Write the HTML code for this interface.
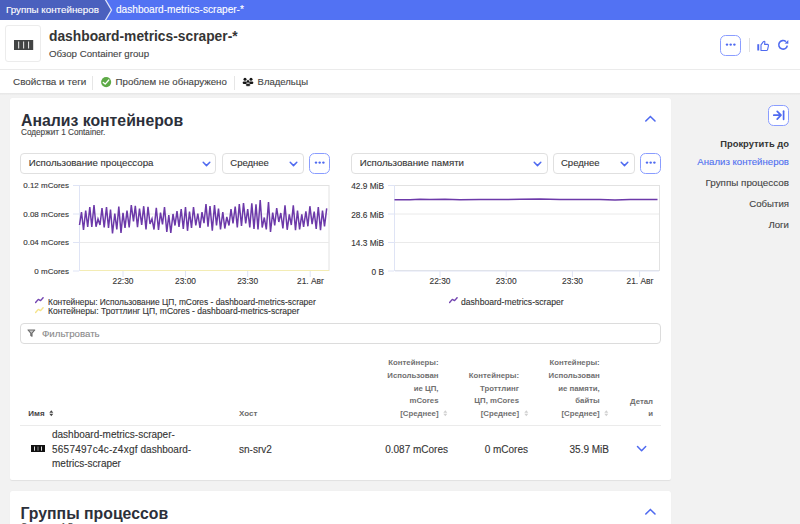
<!DOCTYPE html>
<html><head><meta charset="utf-8">
<style>
*{box-sizing:border-box;margin:0;padding:0}
html,body{-webkit-text-stroke:0.12px currentColor;width:800px;height:524px;overflow:hidden;background:#f2f2f2;font-family:"Liberation Sans",sans-serif;color:#353535}
.abs{position:absolute}
[style*="font-weight:700"]{-webkit-text-stroke:0}
.t{position:absolute;white-space:nowrap;line-height:1}
#bc{position:absolute;left:0;top:0;width:800px;height:20px;background:#5272f3}
#bc1{position:absolute;left:0;top:0;width:112px;height:20px;background:#4a60be;clip-path:polygon(0 0,106px 0,112px 10px,106px 20px,0 20px)}
#hdr{position:absolute;left:0;top:20px;width:800px;height:73px;background:#fff}
.panel{position:absolute;left:10px;width:661px;background:#fff;border-radius:2px;box-shadow:0 0.5px 1px rgba(0,0,0,0.07)}
.dd{position:absolute;height:20.5px;border:1.2px solid #e0e0e0;border-radius:4px;background:#fff}
.btn{position:absolute;width:21px;height:21px;border:1.4px solid #8a9dff;border-radius:5.5px;background:#fff}
.dots{position:absolute;left:5.1px;top:8.1px;width:10px;height:2.2px}
.dots i{position:absolute;top:0;width:2.2px;height:2.2px;border-radius:50%;background:#4f6af0}
</style></head><body>
<div id="bc"></div>
<div id="bc1"></div>
<svg class="abs" style="left:100px;top:0" width="16" height="20"><polyline points="5,-1 11.5,10 5,21" fill="none" stroke="#dfe4fb" stroke-width="1.3"/></svg>
<div class="t" style="left:6px;top:5px;font-size:9.8px;color:#fff">Группы контейнеров</div>
<div class="t" style="left:116px;top:5px;font-size:10.1px;color:#fff">dashboard-metrics-scraper-*</div>

<div id="hdr"></div>
<div class="abs" style="left:0;top:93px;width:800px;height:2px;background:linear-gradient(#e6e6e6,#efefef)"></div>
<div class="abs" style="left:5px;top:25px;width:36px;height:37px;border:1px solid #ececec;border-radius:3px;background:#fff"></div>
<svg class="abs" style="left:14px;top:39.5px" width="20" height="10"><rect x="0" y="0" width="19.2" height="10" fill="#424444"/><rect x="4.1" y="1.5" width="1.1" height="7" fill="#e0e0e0"/><rect x="9.05" y="1.5" width="1.1" height="7" fill="#e0e0e0"/><rect x="14" y="1.5" width="1.1" height="7" fill="#e0e0e0"/></svg>
<div class="t" style="left:49px;top:30px;font-size:13.8px;font-weight:700;color:#353535">dashboard-metrics-scraper-*</div>
<div class="t" style="left:49px;top:49px;font-size:9.7px;color:#454545">Обзор Container group</div>
<div class="btn" style="left:720px;top:34.6px"><svg style="position:absolute;left:-1.4px;top:-1.4px" width="21" height="21"><g fill="#4f6af0"><circle cx="7" cy="10.6" r="1.2"/><circle cx="10.7" cy="10.6" r="1.2"/><circle cx="14.4" cy="10.6" r="1.2"/></g></svg></div>
<div class="abs" style="left:749px;top:38px;width:1px;height:14px;background:#e0e0e0"></div>
<svg class="abs" style="left:756px;top:39.5px" width="14" height="12" viewBox="0 0 14 12"><rect x="1.3" y="4.2" width="1.9" height="6.3" fill="#4f6af0"/><path d="M5 4.8 L7.4 1.6 Q8.4 0.9 8.9 1.8 L8.6 4.4 L11.6 4.4 Q12.6 4.6 12.4 5.8 L11.6 9.6 Q11.3 10.5 10.4 10.5 L5 10.5 Z" fill="none" stroke="#4f6af0" stroke-width="1.1" stroke-linejoin="round"/></svg>
<svg class="abs" style="left:777px;top:39px" width="13" height="12" viewBox="0 0 13 12"><path d="M8.9 2.6 A4.3 4.3 0 1 0 10.3 6.6" fill="none" stroke="#4f6af0" stroke-width="1.6"/><path d="M7.6 4.4 L11.3 0.9 L11.3 4.7 Z" fill="#4f6af0"/></svg>
<div class="abs" style="left:0;top:69px;width:800px;height:1px;background:#ebebeb"></div>

<div class="t" style="left:13px;top:76.8px;font-size:9.9px;color:#454545">Свойства и теги</div>
<div class="abs" style="left:92px;top:76px;width:1px;height:14px;background:#e6e6e6"></div>
<svg class="abs" style="left:101px;top:76.8px" width="11" height="11"><circle cx="5.15" cy="5.1" r="5.05" fill="#5eaa47"/><path d="M2.3 5.4 L4.2 7.1 L7.8 3" fill="none" stroke="#fff" stroke-width="1.3" stroke-linecap="round" stroke-linejoin="round"/></svg>
<div class="t" style="left:115.6px;top:76.8px;font-size:9.7px;color:#454545">Проблем не обнаружено</div>
<div class="abs" style="left:234px;top:76px;width:1px;height:14px;background:#e6e6e6"></div>
<svg class="abs" style="left:242px;top:77px" width="12" height="10" viewBox="0 0 12 10"><g fill="#151515"><circle cx="3" cy="2.3" r="1.5"/><rect x="0.7" y="4.4" width="4.4" height="2.5" rx="1.2"/><circle cx="9" cy="2.2" r="1.5"/><rect x="6.9" y="4.4" width="4.4" height="2.5" rx="1.2"/></g><g fill="#151515" stroke="#fff" stroke-width="0.4"><circle cx="6" cy="4.4" r="1.6"/><rect x="3.8" y="6.6" width="4.5" height="2.6" rx="1.2"/></g></svg>
<div class="t" style="left:257.6px;top:76.8px;font-size:9.5px;color:#454545">Владельцы</div>

<!-- Panel 1 -->
<div class="panel" style="top:97.6px;height:382.4px"></div>
<div class="t" style="left:21px;top:113.4px;font-size:15.8px;font-weight:700;color:#2c303a">Анализ контейнеров</div>
<div class="t" style="left:21px;top:129px;font-size:8.2px;color:#454545">Содержит 1 Container.</div>
<svg class="abs" style="left:644px;top:114px" width="13" height="9"><polyline points="1.8,7 6.4,2.5 11,7" fill="none" stroke="#4f6af0" stroke-width="1.6" stroke-linecap="round"/></svg>


<!-- dropdowns -->
<div class="dd" style="left:20px;top:153px;width:196px"></div>
<div class="t" style="left:28.7px;top:158px;font-size:9.7px;color:#353535">Использование процессора</div>
<svg class="abs" style="left:202px;top:160.8px" width="9" height="6"><polyline points="1.2,1.3 4.5,4.6 7.8,1.3" fill="none" stroke="#4f6af0" stroke-width="1.5" stroke-linecap="round" stroke-linejoin="round"/></svg>
<div class="dd" style="left:222px;top:153px;width:82px"></div>
<div class="t" style="left:230.3px;top:158px;font-size:9.5px;color:#353535">Среднее</div>
<svg class="abs" style="left:289px;top:160.8px" width="9" height="6"><polyline points="1.2,1.3 4.5,4.6 7.8,1.3" fill="none" stroke="#4f6af0" stroke-width="1.5" stroke-linecap="round" stroke-linejoin="round"/></svg>
<div class="btn" style="left:309px;top:152.8px"><svg style="position:absolute;left:-1.4px;top:-1.4px" width="21" height="21"><g fill="#4f6af0"><circle cx="7" cy="10.6" r="1.2"/><circle cx="10.7" cy="10.6" r="1.2"/><circle cx="14.4" cy="10.6" r="1.2"/></g></svg></div>
<div class="dd" style="left:351px;top:153px;width:197px"></div>
<div class="t" style="left:359.7px;top:158px;font-size:9.7px;color:#353535">Использование памяти</div>
<svg class="abs" style="left:533px;top:160.8px" width="9" height="6"><polyline points="1.2,1.3 4.5,4.6 7.8,1.3" fill="none" stroke="#4f6af0" stroke-width="1.5" stroke-linecap="round" stroke-linejoin="round"/></svg>
<div class="dd" style="left:553px;top:153px;width:82px"></div>
<div class="t" style="left:561px;top:158px;font-size:9.5px;color:#353535">Среднее</div>
<svg class="abs" style="left:620px;top:160.8px" width="9" height="6"><polyline points="1.2,1.3 4.5,4.6 7.8,1.3" fill="none" stroke="#4f6af0" stroke-width="1.5" stroke-linecap="round" stroke-linejoin="round"/></svg>
<div class="btn" style="left:640px;top:152.8px"><svg style="position:absolute;left:-1.4px;top:-1.4px" width="21" height="21"><g fill="#4f6af0"><circle cx="7" cy="10.6" r="1.2"/><circle cx="10.7" cy="10.6" r="1.2"/><circle cx="14.4" cy="10.6" r="1.2"/></g></svg></div>

<!-- CPU chart -->
<svg class="abs" style="left:0;top:0" width="800" height="524">
<g stroke="#eaeaea" stroke-width="1" fill="none">
<rect x="79.5" y="185.5" width="249.5" height="85" stroke="#e2e2e2"/>
<line x1="80" y1="214" x2="329" y2="214"/>
<line x1="80" y1="242.5" x2="329" y2="242.5"/>
</g>
<g stroke="#dfe4f5" stroke-width="1">
<line x1="79.5" y1="185" x2="79.5" y2="271"/>
<line x1="73" y1="185.5" x2="79" y2="185.5"/><line x1="73" y1="214" x2="79" y2="214"/><line x1="73" y1="242.5" x2="79" y2="242.5"/><line x1="73" y1="271" x2="79" y2="271"/>
<line x1="123" y1="271" x2="123" y2="277"/><line x1="185.5" y1="271" x2="185.5" y2="277"/><line x1="247.7" y1="271" x2="247.7" y2="277"/><line x1="310.2" y1="271" x2="310.2" y2="277"/>
</g>
<line x1="80" y1="270.5" x2="329" y2="270.5" stroke="#f3ecb4" stroke-width="1.2"/>
<polyline points="79.5,225.0 81.5,212.0 83.5,230.0 85.7,210.5 87.7,227.0 89.8,207.0 91.8,226.8 94.0,205.0 96.0,226.8 98.0,219.0 100.0,225.0 102.0,208.0 104.2,227.5 106.5,207.0 108.5,228.0 110.5,209.5 112.5,233.5 114.8,213.5 116.8,229.5 118.8,206.5 121.0,233.0 123.0,212.8 125.0,227.8 127.0,210.5 129.2,227.5 131.3,205.0 133.5,221.5 135.3,205.8 137.5,227.2 139.5,208.5 141.7,224.8 143.7,206.2 146.0,229.5 148.0,206.8 150.0,224.0 152.0,218.8 154.0,229.5 156.3,207.8 158.5,230.0 160.5,212.5 162.5,224.5 164.5,207.0 166.8,232.0 168.8,215.0 170.8,233.0 173.0,214.0 175.0,225.5 177.0,211.0 179.0,227.0 181.2,209.0 183.3,228.8 185.5,207.0 187.5,230.8 189.5,211.5 191.5,228.0 193.5,207.0 195.8,225.5 197.8,213.5 200.0,227.8 202.0,212.2 204.0,223.2 206.0,204.0 208.0,226.8 210.0,206.0 212.3,230.8 214.5,205.0 216.5,225.5 218.5,208.5 220.5,229.5 222.8,212.0 224.8,228.5 226.8,217.0 229.0,225.5 231.0,209.2 233.0,223.5 235.2,206.5 237.3,227.5 239.3,204.0 241.5,226.0 243.5,203.0 245.7,223.5 247.7,209.0 249.8,227.5 251.8,203.2 254.0,229.0 256.0,204.2 258.0,229.5 260.2,200.0 262.2,227.5 264.3,217.5 266.3,229.5 268.5,202.0 270.5,232.0 272.7,212.5 274.7,225.5 276.7,208.0 278.8,222.0 280.8,213.0 282.9,228.5 285.0,205.3 287.2,229.8 289.3,214.3 291.3,225.0 293.3,205.3 295.5,230.2 297.5,210.5 299.6,229.3 301.8,214.3 303.6,226.8 305.9,211.3 307.9,226.3 309.9,206.2 312.1,224.2 314.2,211.7 316.2,228.9 318.3,207.0 320.5,230.2 322.5,210.5 324.5,226.3 326.7,208.3" fill="none" stroke="#6c39a9" stroke-width="1.5" stroke-linejoin="miter"/>
</svg>
<div class="t" style="right:731px;top:182px;font-size:8px;color:#353535">0.12 mCores</div>
<div class="t" style="right:731px;top:210.5px;font-size:8px;color:#353535">0.08 mCores</div>
<div class="t" style="right:731px;top:239px;font-size:8px;color:#353535">0.04 mCores</div>
<div class="t" style="right:731px;top:267.5px;font-size:8px;color:#353535">0 mCores</div>
<div class="t" style="left:112.5px;top:277px;font-size:8.4px;color:#353535">22:30</div>
<div class="t" style="left:175px;top:277px;font-size:8.4px;color:#353535">23:00</div>
<div class="t" style="left:237.2px;top:277px;font-size:8.4px;color:#353535">23:30</div>
<div class="t" style="left:297px;top:277px;font-size:8.4px;color:#353535">21. Авг</div>

<!-- Memory chart -->
<svg class="abs" style="left:0;top:0" width="800" height="524">
<g stroke="#eaeaea" stroke-width="1" fill="none">
<rect x="394.5" y="185.5" width="265" height="85" stroke="#e2e2e2"/>
<line x1="395" y1="214" x2="659" y2="214"/>
<line x1="395" y1="242.5" x2="659" y2="242.5"/>
</g>
<g stroke="#dfe4f5" stroke-width="1">
<line x1="394.5" y1="185" x2="394.5" y2="271"/>
<line x1="388" y1="185.5" x2="394" y2="185.5"/><line x1="388" y1="214" x2="394" y2="214"/><line x1="388" y1="242.5" x2="394" y2="242.5"/><line x1="388" y1="271" x2="394" y2="271"/>
<line x1="440" y1="271" x2="440" y2="277"/><line x1="506.2" y1="271" x2="506.2" y2="277"/><line x1="572.4" y1="271" x2="572.4" y2="277"/><line x1="639.6" y1="271" x2="639.6" y2="277"/>
<line x1="395" y1="271" x2="659" y2="271"/>
</g>
<polyline points="394.5,199.8 410,199.7 420,199.3 430,199.5 445,199.3 460,199.7 480,199.5 500,199.6 520,199.2 540,199.1 560,199.6 580,199.5 600,199.6 615,199.9 630,199.6 657.5,199.6" fill="none" stroke="#6c39a9" stroke-width="1.5"/>
</svg>
<div class="t" style="right:416px;top:182px;font-size:8.3px;color:#353535">42.9 MiB</div>
<div class="t" style="right:416px;top:210.5px;font-size:8.3px;color:#353535">28.6 MiB</div>
<div class="t" style="right:416px;top:239px;font-size:8.3px;color:#353535">14.3 MiB</div>
<div class="t" style="right:416px;top:267.5px;font-size:8.3px;color:#353535">0 B</div>
<div class="t" style="left:429.5px;top:277px;font-size:8.4px;color:#353535">22:30</div>
<div class="t" style="left:495.7px;top:277px;font-size:8.4px;color:#353535">23:00</div>
<div class="t" style="left:562px;top:277px;font-size:8.4px;color:#353535">23:30</div>
<div class="t" style="left:626.5px;top:277px;font-size:8.4px;color:#353535">21. Авг</div>

<!-- legends -->
<svg class="abs" style="left:35px;top:297px" width="9" height="7"><polyline points="0.6,5.5 3.3,2.4 5.6,3.6 8.1,0.7" fill="none" stroke="#7244b0" stroke-width="1.4" stroke-linejoin="round" stroke-linecap="round"/></svg>
<div class="t" style="left:48px;top:297.8px;font-size:8.4px;color:#353535">Контейнеры: Использование ЦП, mCores - dashboard-metrics-scraper</div>
<svg class="abs" style="left:35px;top:306.5px" width="9" height="7"><polyline points="0.6,5.5 3.3,2.4 5.6,3.6 8.1,0.7" fill="none" stroke="#f5e38a" stroke-width="1.4" stroke-linejoin="round" stroke-linecap="round"/></svg>
<div class="t" style="left:48px;top:307.3px;font-size:8.55px;color:#353535">Контейнеры: Троттлинг ЦП, mCores - dashboard-metrics-scraper</div>
<svg class="abs" style="left:449px;top:297px" width="9" height="7"><polyline points="0.6,5.5 3.3,2.4 5.6,3.6 8.1,0.7" fill="none" stroke="#7244b0" stroke-width="1.4" stroke-linejoin="round" stroke-linecap="round"/></svg>
<div class="t" style="left:461px;top:297.8px;font-size:8.6px;color:#353535">dashboard-metrics-scraper</div>

<!-- filter -->
<div class="abs" style="left:20px;top:322.5px;width:641px;height:21px;border:1px solid #dcdcdc;border-radius:4px;background:#fff"></div>
<svg class="abs" style="left:27px;top:329px" width="9" height="8" viewBox="0 0 9 8"><path d="M1 1 H7.8 L5 4.2 V7.3 L3.8 6.6 V4.2 Z" fill="#c8c8c8" stroke="#6a6a6a" stroke-width="1.1" stroke-linejoin="round"/></svg>
<div class="t" style="left:42px;top:328.5px;font-size:9.7px;color:#8a8a8a">Фильтровать</div>

<!-- table header -->
<div class="t" style="left:28.3px;top:409.5px;font-size:8px;font-weight:700;color:#454545">Имя</div>
<svg class="abs" style="left:49px;top:409.5px" width="5" height="7"><path d="M0.3 2.8 L2.3 0.3 L4.3 2.8Z M0.3 3.8 L2.3 6.3 L4.3 3.8Z" fill="#454545"/></svg>
<div class="t" style="left:239px;top:409.5px;font-size:8px;font-weight:700;color:#6b6b6b">Хост</div>
<div class="abs hdrc" style="right:361.5px;top:357.4px;text-align:right;font-size:7.8px;font-weight:700;color:#707070;line-height:12.65px;white-space:nowrap">Контейнеры:<br>Использован<br>ие ЦП,<br>mCores<br>[Среднее]</div>
<svg class="abs" style="left:442.5px;top:409.5px" width="5" height="7"><path d="M0.3 2.8 L2.3 0.3 L4.3 2.8Z M0.3 3.8 L2.3 6.3 L4.3 3.8Z" fill="#d0d0d0"/></svg>
<div class="abs hdrc" style="right:281px;top:370.1px;text-align:right;font-size:7.8px;font-weight:700;color:#707070;line-height:12.65px;white-space:nowrap">Контейнеры:<br>Троттлинг<br>ЦП, mCores<br>[Среднее]</div>
<svg class="abs" style="left:523.6px;top:409.5px" width="5" height="7"><path d="M0.3 2.8 L2.3 0.3 L4.3 2.8Z M0.3 3.8 L2.3 6.3 L4.3 3.8Z" fill="#d0d0d0"/></svg>
<div class="abs hdrc" style="right:200.3px;top:357.4px;text-align:right;font-size:7.8px;font-weight:700;color:#707070;line-height:12.65px;white-space:nowrap">Контейнеры:<br>Использован<br>ие памяти,<br>байты<br>[Среднее]</div>
<svg class="abs" style="left:604px;top:409.5px" width="5" height="7"><path d="M0.3 2.8 L2.3 0.3 L4.3 2.8Z M0.3 3.8 L2.3 6.3 L4.3 3.8Z" fill="#d0d0d0"/></svg>
<div class="abs hdrc" style="right:147px;top:395.6px;text-align:right;font-size:7.8px;font-weight:700;color:#707070;line-height:12.65px;white-space:nowrap">Детал<br>и</div>
<div class="abs" style="left:20px;top:425px;width:641px;height:1px;background:#ebebeb"></div>

<!-- row -->
<svg class="abs" style="left:31px;top:445.2px" width="14" height="7.2"><rect width="14" height="7.2" fill="#111"/><rect x="3" y="1.5" width="1" height="4.2" fill="#ddd"/><rect x="6.5" y="1.5" width="1" height="4.2" fill="#888"/><rect x="10" y="1.5" width="1" height="4.2" fill="#ddd"/></svg>
<div class="abs" style="left:52px;top:428.3px;font-size:10px;line-height:14.4px;color:#353535;white-space:nowrap">dashboard-metrics-scraper-<br><span style="letter-spacing:0.25px">5657497c4c-z4xgf</span> dashboard-<br>metrics-scraper</div>
<div class="t" style="left:239px;top:444.5px;font-size:10px;color:#353535">sn-srv2</div>
<div class="t" style="right:352px;top:444.5px;font-size:10px;color:#353535">0.087 mCores</div>
<div class="t" style="right:272px;top:444.5px;font-size:10px;color:#353535">0 mCores</div>
<div class="t" style="right:191px;top:444.5px;font-size:10px;color:#353535">35.9 MiB</div>
<svg class="abs" style="left:635.5px;top:445px" width="11" height="8"><polyline points="1.5,1.5 5.6,5.8 9.7,1.5" fill="none" stroke="#4f6af0" stroke-width="1.5" stroke-linecap="round" stroke-linejoin="round"/></svg>

<!-- sidebar -->
<div class="btn" style="left:768px;top:105px"></div>
<svg class="abs" style="left:772px;top:109px" width="14" height="13" viewBox="0 0 14 13"><path d="M1.8 6.2 H8.6 M5.2 2.3 L9 6.2 L5.2 10.1" fill="none" stroke="#4f6af0" stroke-width="1.7" stroke-linecap="round" stroke-linejoin="round"/><line x1="11.6" y1="2.2" x2="11.6" y2="10.3" stroke="#4f6af0" stroke-width="1.7" stroke-linecap="round"/></svg>
<div class="t" style="right:11px;top:138.6px;font-size:9.4px;font-weight:700;color:#353535">Прокрутить до</div>
<div class="t" style="right:11px;top:157.2px;font-size:9.65px;color:#5070f0">Анализ контейнеров</div>
<div class="t" style="right:11px;top:178.2px;font-size:9.85px;color:#454545">Группы процессов</div>
<div class="t" style="right:11px;top:199.3px;font-size:9.65px;color:#454545">События</div>
<div class="t" style="right:11px;top:220.4px;font-size:9.65px;color:#454545">Логи</div>

<!-- Panel 2 -->
<div class="panel" style="top:490.8px;height:40px"></div>
<div class="t" style="left:20.5px;top:506.2px;font-size:15.8px;font-weight:700;color:#2c303a">Группы процессов</div>
<div class="t" style="left:21px;top:523.3px;font-size:8.2px;color:#454545">Содержит 1 Группа процессов</div>
<svg class="abs" style="left:644px;top:507px" width="13" height="9"><polyline points="1.8,7 6.4,2.5 11,7" fill="none" stroke="#4f6af0" stroke-width="1.6" stroke-linecap="round"/></svg>

</body></html>
